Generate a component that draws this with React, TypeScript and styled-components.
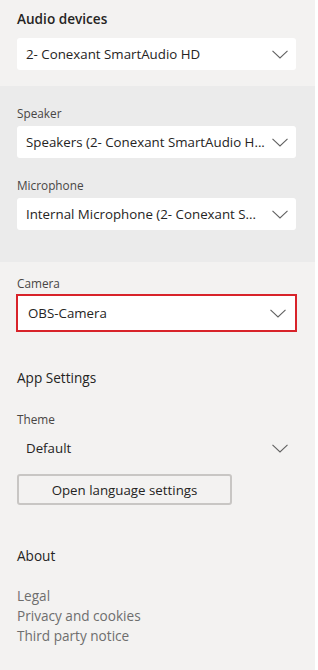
import React from "react";
import styled, { createGlobalStyle } from "styled-components";

const GlobalStyle = createGlobalStyle`
  html, body {
    margin: 0;
    padding: 0;
    background: #ffffff;
  }
  body {
    font-family: "Open Sans", "Noto Sans", sans-serif;
    color: #252423;
  }
`;

function Chevron() {
  return (
    <svg width="16" height="9" viewBox="0 0 16 9" fill="none">
      <polyline
        points="0.5,0.8 8,8 15.5,0.8"
        stroke="#616161"
        strokeWidth="1.1"
        fill="none"
      />
    </svg>
  );
}

type SelectProps = {
  value: string;
  plain?: boolean;
  highlighted?: boolean;
};

function Select({ value, plain, highlighted }: SelectProps) {
  return (
    <SelectBox $plain={plain} $highlighted={highlighted}>
      <SelectText>{value}</SelectText>
      <Chevron />
    </SelectBox>
  );
}

function App() {
  return (
    <>
      <GlobalStyle />
      <Panel>
        <Section $top={9} $bottom={16}>
          <Heading>Audio devices</Heading>
          <Select value="2- Conexant SmartAudio HD" />
        </Section>

        <Band>
          <Label>Speaker</Label>
          <Select value="Speakers (2- Conexant SmartAudio H..." />
          <Label $gap={19}>Microphone</Label>
          <Select value="Internal Microphone (2- Conexant S..." />
        </Band>

        <Section $top={13} $bottom={0}>
          <Label $gap={0} $after={3}>
            Camera
          </Label>
          <Select value="OBS-Camera" highlighted />

          <Title>App Settings</Title>
          <Label $gap={23}>Theme</Label>
          <Select value="Default" plain />
          <Button>Open language settings</Button>

          <Title $gap={41}>About</Title>
          <Links>
            <LinkItem>Legal</LinkItem>
            <LinkItem>Privacy and cookies</LinkItem>
            <LinkItem>Third party notice</LinkItem>
          </Links>
        </Section>
      </Panel>
    </>
  );
}

const Panel = styled.div`
  width: 315px;
  min-height: 670px;
  background: #f3f2f1;
  display: flex;
  flex-direction: column;
`;

const Section = styled.div<{ $top: number; $bottom: number }>`
  padding: ${(p) => p.$top}px 19px ${(p) => p.$bottom}px 17px;
  display: flex;
  flex-direction: column;
`;

const Band = styled.div`
  background: #ebebeb;
  padding: 19px 19px 32px 17px;
  display: flex;
  flex-direction: column;
`;

const Heading = styled.div`
  font-size: 13.6px;
  font-weight: 600;
  line-height: 20px;
  color: #252423;
  margin-bottom: 9px;
`;

const Title = styled.div<{ $gap?: number }>`
  font-size: 13.6px;
  line-height: 20px;
  color: #252423;
  margin-top: ${(p) => p.$gap ?? 36}px;
`;

const Label = styled.div<{ $gap?: number; $after?: number }>`
  font-size: 11.8px;
  line-height: 16px;
  color: #484644;
  margin-top: ${(p) => p.$gap ?? 0}px;
  margin-bottom: ${(p) => p.$after ?? 5}px;
`;

const SelectBox = styled.div<{ $plain?: boolean; $highlighted?: boolean }>`
  box-sizing: border-box;
  display: flex;
  align-items: center;
  gap: 8px;
  height: ${(p) => (p.$highlighted ? 38 : 32)}px;
  margin: ${(p) => (p.$highlighted ? "0 -1px" : "0")};
  padding: 0 ${(p) => (p.$highlighted ? 9 : 8)}px 0
    ${(p) => (p.$highlighted ? 10 : 9)}px;
  background: ${(p) => (p.$plain ? "transparent" : "#ffffff")};
  border: ${(p) => (p.$highlighted ? "2px solid #d8232a" : "none")};
  border-radius: ${(p) => (p.$highlighted ? 0 : 3)}px;
`;

const SelectText = styled.span`
  flex: 1;
  min-width: 0;
  font-size: 13.3px;
  color: #252423;
  white-space: nowrap;
`;

const Button = styled.button`
  box-sizing: border-box;
  margin-top: 10px;
  width: 215px;
  height: 31px;
  background: #f3f2f1;
  border: 2px solid #c8c6c4;
  border-radius: 3px;
  font-family: "Open Sans", "Noto Sans", sans-serif;
  font-size: 13.3px;
  color: #252423;
  padding: 0;
`;

const Links = styled.div`
  margin-top: 20px;
  display: flex;
  flex-direction: column;
`;

const LinkItem = styled.div`
  font-size: 13.6px;
  line-height: 20px;
  color: #6e6e6e;
`;

export default App;
